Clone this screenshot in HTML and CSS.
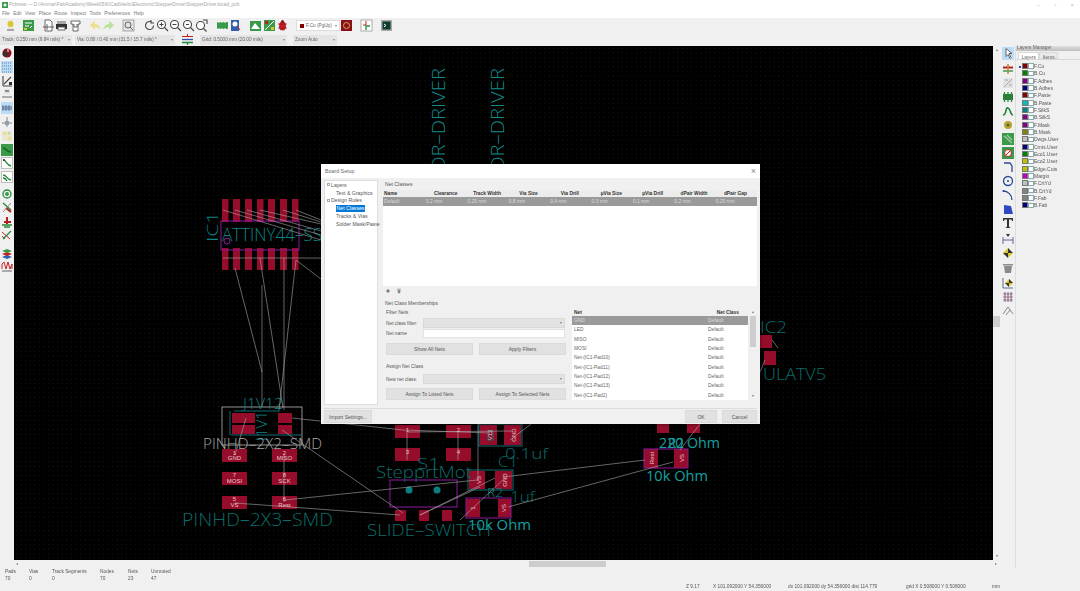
FILE: index.html
```html
<!DOCTYPE html>
<html lang="en">
<head>
<meta charset="utf-8">
<title>Pcbnew</title>
<link rel="stylesheet" href="styles.css">
</head>
<body>
<div class="app">
  <header class="titlebar">
    <svg class="appicon" viewBox="0 0 7 7"><rect width="7" height="7" class="f-green"/><rect x="2" y="2" width="3" height="3" class="f-white"/></svg>
    <span class="titletext">Pcbnew — D:\Ammar\FabAcademy\Week05\KiCad\Hello\Electronic\StepperDriver\StepperDriver.kicad_pcb</span>
    <div class="winctl"><span>–</span><span>▫</span><span>×</span></div>
  </header>
  <nav class="menubar">
    <span>File</span><span>Edit</span><span>View</span><span>Place</span><span>Route</span><span>Inspect</span><span>Tools</span><span>Preferences</span><span>Help</span>
  </nav>
  <div class="toolbar tb1">
    <svg class="tool" viewBox="0 0 13 13"><path class="f-pale" d="M4 1h5v9H4z"/><circle class="f-yellow" cx="6.5" cy="5" r="3"/><rect class="f-grey" x="3" y="10" width="7" height="2"/></svg>
    <i class="sp5"></i>
    <svg class="tool" viewBox="0 0 13 13"><rect class="f-green" x="1" y="1" width="11" height="11"/><path class="s-white" d="M3 4h7M3 7h4M8 9l2-2"/><rect class="f-yellow" x="2" y="9" width="3" height="2"/></svg>
    <i class="sp7"></i>
    <svg class="tool" viewBox="0 0 13 13"><path class="f-white s-dark" d="M3 1h5l2 2v9H3z"/><path class="s-dark" d="M1 8h11M5 5v6"/></svg>
    <svg class="tool" viewBox="0 0 13 13"><rect class="f-grey" x="2" y="2" width="9" height="3"/><rect class="f-dark" x="1" y="5" width="11" height="5"/><rect class="f-white s-dark" x="3" y="8" width="7" height="3"/></svg>
    <i class="sp1"></i>
    <svg class="tool" viewBox="0 0 13 13"><path class="f-white s-dark" d="M2 2h9v3H9v7H4V5H2z"/><path class="s-dark" d="M5 5v3h3V5"/></svg>
    <i class="sp7"></i>
    <svg class="tool" viewBox="0 0 13 13"><path class="f-pale-y" d="M1 6l5-4v3c3 0 5 2 6 6-2-2-3-3-6-3v3z"/></svg>
    <svg class="tool" viewBox="0 0 13 13"><path class="f-pale-g" d="M12 6L7 2v3C4 5 2 7 1 11c2-2 3-3 6-3v3z"/></svg>
    <i class="sp7"></i>
    <svg class="tool" viewBox="0 0 13 13"><rect class="f-light s-mid" x="1" y="1" width="11" height="11"/><circle class="s-dark" cx="6" cy="6" r="3"/><path class="s-dark" d="M8 8l3 3"/></svg>
    <i class="sp8"></i>
    <svg class="tool" viewBox="0 0 13 13"><path class="s-dark2" d="M10.5 6.5a4 4 0 1 1-2-3.4M8 1v3h3"/></svg>
    <svg class="tool" viewBox="0 0 13 13"><circle class="f-white s-dark2" cx="5.5" cy="5.5" r="4"/><path class="s-dark2" d="M8.5 8.5l3.5 3.5M3.5 5.5h4M5.5 3.5v4"/></svg>
    <svg class="tool" viewBox="0 0 13 13"><circle class="f-white s-dark2" cx="5.5" cy="5.5" r="4"/><path class="s-dark2" d="M8.5 8.5l3.5 3.5M3.5 5.5h4"/></svg>
    <svg class="tool" viewBox="0 0 13 13"><circle class="f-white s-dark2" cx="5.5" cy="5.5" r="4"/><path class="s-dark2" d="M8.5 8.5l3.5 3.5M4 5.5h3"/></svg>
    <svg class="tool" viewBox="0 0 13 13"><circle class="f-white s-dark2" cx="5.5" cy="6.5" r="4"/><path class="s-dark2" d="M8.5 9.5l3 3M8 1h4v4"/></svg>
    <i class="sp8"></i>
    <svg class="tool" viewBox="0 0 13 13"><rect class="f-green" x="1" y="3" width="11" height="7" rx="1"/><path class="s-white" d="M3 2v2M6 2v2M9 2v2M3 9v2M6 9v2M9 9v2"/></svg>
    <svg class="tool" viewBox="0 0 13 13"><rect class="f-blue" x="2" y="1" width="8" height="11"/><circle class="f-white" cx="6" cy="5" r="2.5"/><path class="s-red" d="M8 7l3 4"/></svg>
    <i class="sp7"></i>
    <svg class="tool" viewBox="0 0 13 13"><rect class="f-green" x="1" y="2" width="11" height="10"/><path class="f-white" d="M2 10l4-6 5 6z"/></svg>
    <i class="sp1"></i>
    <svg class="tool" viewBox="0 0 13 13"><rect class="f-green" x="1" y="1" width="11" height="11"/><path class="s-white" d="M2 11l9-9"/><rect class="f-red" x="2" y="2" width="3" height="3"/><rect class="f-yellow" x="8" y="8" width="3" height="3"/></svg>
    <svg class="tool" viewBox="0 0 13 13"><ellipse class="f-red" cx="6.5" cy="7" rx="3.5" ry="4.5"/><circle class="f-darkred" cx="6.5" cy="2.5" r="1.5"/><path class="s-darkred" d="M2 5l9 0M2 9l9 0"/></svg>
    <i class="sp7"></i>
    <div class="select sel-layer"><i class="swatch-red"></i>F.Cu (PgUp)<b class="caret"></b></div>
    <svg class="tool" viewBox="0 0 13 13"><rect class="f-darkred" x="1" y="1" width="11" height="11"/><circle class="s-gold" cx="6.5" cy="6.5" r="3"/></svg>
    <i class="sp7"></i>
    <svg class="tool" viewBox="0 0 13 13"><rect class="f-white s-mid" x="1" y="1" width="11" height="11"/><path class="s-red" d="M6 2v4H3"/><path class="s-greenline" d="M6 11V7h4"/></svg>
    <i class="sp7"></i>
    <svg class="tool" viewBox="0 0 13 13"><rect class="f-grey" x="1" y="1" width="11" height="11"/><rect class="f-term" x="2.5" y="2.5" width="8" height="8"/><path class="s-white" d="M4 5l2 1.5L4 8"/></svg>
  </div>
  <div class="toolbar tb2">
    <div class="select sel-track">Track: 0.250 mm (9.84 mils) *<b class="caret"></b></div>
    <div class="select sel-via">Via: 0.80 / 0.40 mm (31.5 / 15.7 mils) *<b class="caret"></b></div>
    <svg class="tool auto" viewBox="0 0 13 13"><path class="s-red" d="M1 3.5h11M6.5 1v3"/><path class="s-blueline" d="M1 6.5h11"/><path class="s-greenline" d="M1 9.5h11M6.5 9v3"/></svg>
    <div class="select sel-grid">Grid: 0.5000 mm (20.00 mils)<b class="caret"></b></div>
    <div class="select sel-zoom">Zoom Auto<b class="caret"></b></div>
  </div>
  <main class="main">
    <aside class="lefttools">
      <svg class="ltool t53" viewBox="0 0 12 12"><circle class="f-darkred" cx="6" cy="6" r="4.5"/><circle class="f-dark" cx="4" cy="7" r="2.5"/><path class="s-white" d="M7 2v3"/></svg>
      <svg class="ltool on" viewBox="0 0 12 12"><path class="s-dots" d="M1 2h10M1 5h10M1 8h10M1 11h10"/></svg>
      <svg class="ltool" viewBox="0 0 12 12"><path class="s-dark2" d="M2 11V1M2 11h9M3 9l7-7"/><rect class="f-dark" x="8" y="7" width="3" height="3"/></svg>
      <svg class="ltool" viewBox="0 0 12 12"><rect class="f-light" x="3" y="1" width="6" height="5"/><path class="s-dark" d="M1 9h10"/><path class="s-dark2" d="M4 3h4"/></svg>
      <svg class="ltool on" viewBox="0 0 12 12"><rect class="f-mid" x="1" y="4" width="10" height="4"/><path class="s-blue2" d="M2 3v6M5 3v6M8 3v6"/></svg>
      <svg class="ltool" viewBox="0 0 12 12"><path class="s-mid2" d="M6 1v10M1 7h10"/><rect class="f-mid" x="4" y="5" width="4" height="4"/></svg>
      <svg class="ltool" viewBox="0 0 12 12"><rect class="f-pale" x="1" y="1" width="10" height="10"/><circle class="f-pale-y" cx="3.5" cy="3.5" r="2"/><circle class="f-pale-y" cx="8.5" cy="8.5" r="2"/><circle class="f-pale-g" cx="8" cy="3" r="1.5"/></svg>
      <svg class="ltool" viewBox="0 0 12 12"><rect class="f-green" width="12" height="12"/><path class="s-dgreen" d="M2 4c3 0 3 4 8 4"/></svg>
      <svg class="ltool" viewBox="0 0 12 12"><rect class="f-white s-pale" x=".5" y=".5" width="11" height="11"/><path class="s-dgreen2" d="M2 3c4 0 3 5 8 6"/><circle class="f-dark" cx="3" cy="3" r="1"/></svg>
      <svg class="ltool" viewBox="0 0 12 12"><rect class="f-white s-pale" x=".5" y=".5" width="11" height="11"/><path class="s-dgreen2" d="M2 4c4 0 3 4 8 5M2 7c2 0 3 1 4 3"/></svg>
      <svg class="ltool t194" viewBox="0 0 12 12"><circle class="s-dgreen2" cx="6" cy="6" r="4"/><circle class="f-green" cx="6" cy="6" r="2"/></svg>
      <svg class="ltool" viewBox="0 0 12 12"><path class="s-dgreen2" d="M2 1l8 7"/><path class="s-redthick" d="M5 6l5 4"/><path class="s-mid2" d="M10 1L2 10"/></svg>
      <svg class="ltool" viewBox="0 0 12 12"><path class="s-redthick" d="M6 1v7M3 6h7"/><path class="s-dgreen2" d="M1 9h10M3 11h6"/></svg>
      <svg class="ltool" viewBox="0 0 12 12"><path class="s-red" d="M1 3l8 7M1 7l3 3"/><path class="s-dgreen2" d="M2 10l8-8"/></svg>
      <svg class="ltool t252" viewBox="0 0 12 12"><path class="f-blue" d="M1 9l5-2 5 2-5 2z"/><path class="f-red" d="M1 6l5-2 5 2-5 2z"/><path class="f-green" d="M1 3l5-2 5 2-5 2z"/></svg>
      <svg class="ltool" viewBox="0 0 12 12"><path class="s-red" d="M1 9V4l2-2 2 7 2-7 2 7 2-5v5"/><path class="s-dark" d="M1 11h10"/></svg>
    </aside>
    <section class="workspace">
      <div class="canvasrow">
        <div class="canvas">
          <svg class="pcb" viewBox="14 46 979 514" xmlns="http://www.w3.org/2000/svg">
            <g class="silk-v">
              <text transform="translate(445 172) rotate(-90)" textLength="104" lengthAdjust="spacingAndGlyphs">OR–DRIVER</text>
              <text transform="translate(504 172) rotate(-90)" textLength="104" lengthAdjust="spacingAndGlyphs">OR–DRIVER</text>
            </g>
            <g class="pads">
              <rect x="222" y="199" width="6.5" height="23"/><rect x="233" y="199" width="7" height="23"/><rect x="245" y="199" width="7" height="23"/><rect x="257" y="199" width="6.5" height="23"/><rect x="268" y="199" width="7" height="23"/><rect x="280" y="199" width="7" height="23"/><rect x="292" y="199" width="6.5" height="23"/>
              <rect x="222" y="248" width="6.5" height="22"/><rect x="233" y="248" width="7" height="22"/><rect x="245" y="248" width="7" height="22"/><rect x="257" y="248" width="6.5" height="22"/><rect x="268" y="248" width="7" height="22"/><rect x="280" y="248" width="7" height="22"/><rect x="292" y="248" width="6.5" height="22"/>
              <rect x="232" y="413" width="23" height="10"/><rect x="232" y="425" width="23" height="9"/><rect x="278" y="413" width="14" height="10"/><rect x="278" y="425" width="14" height="9"/>
              <rect x="222" y="449" width="25" height="13"/><rect x="272" y="449" width="25" height="13"/><rect x="222" y="472" width="25" height="13"/><rect x="272" y="472" width="25" height="13"/><rect x="222" y="496" width="25" height="13"/><rect x="272" y="496" width="25" height="13"/>
              <rect x="395" y="425" width="25" height="13"/><rect x="446" y="425" width="25" height="13"/><rect x="395" y="448" width="25" height="13"/><rect x="446" y="448" width="25" height="13"/>
              <rect x="395" y="510" width="11" height="11"/><rect x="419" y="510" width="10" height="11"/><rect x="442" y="510" width="10" height="11"/>
              <rect x="480" y="425" width="17" height="20"/><rect x="504" y="425" width="17" height="20"/>
              <rect x="469" y="471" width="16" height="18"/><rect x="495" y="471" width="17" height="18"/>
              <rect x="466" y="499" width="14" height="18"/><rect x="498" y="499" width="13" height="18"/>
              <rect x="657" y="421" width="12" height="12"/><rect x="687" y="421" width="13" height="12"/>
              <rect x="644" y="449" width="14" height="19"/><rect x="674" y="449" width="14" height="19"/>
              <rect x="760" y="335" width="12" height="13"/><rect x="764" y="351" width="12" height="14"/>
            </g>
            <g class="outline">
              <rect x="221" y="221" width="78" height="29"/>
              <circle cx="227" cy="241" r="3"/>
              <rect x="390" y="480" width="67" height="27"/>
              <rect x="466" y="498" width="45" height="20"/>
              <rect x="644" y="449" width="44" height="19"/>
            </g>
            <g class="teal-line">
              <path d="M234 411h46M231 435h70M230 411v24"/>
              <rect x="479" y="424" width="43" height="22"/>
              <rect x="468" y="470" width="45" height="20"/>
              <rect x="488" y="431" width="5" height="9"/>
            </g>
            <rect class="white-box" x="222" y="407" width="80" height="38"/>
            <g class="silk">
              <text class="s14" transform="translate(218 242) rotate(-90)" textLength="30" lengthAdjust="spacingAndGlyphs">IC1</text>
              <text x="222" y="241" textLength="100" lengthAdjust="spacingAndGlyphs">ATTINY44–SS</text>
              <text class="s14" x="243" y="409" textLength="40" lengthAdjust="spacingAndGlyphs">J1V12</text>
              <text class="s14" transform="translate(267 441) rotate(-90)" textLength="30" lengthAdjust="spacingAndGlyphs">J1V1</text>
              <text class="s17 dim" x="182" y="526" textLength="151" lengthAdjust="spacingAndGlyphs">PINHD–2X3–SMD</text>
              <text class="s14 dim" x="417" y="469" textLength="23" lengthAdjust="spacingAndGlyphs">S1</text>
              <text class="s16 dim" x="376" y="478" textLength="96" lengthAdjust="spacingAndGlyphs">StepprtMot</text>
              <text class="s16 dim" x="367" y="536" textLength="124" lengthAdjust="spacingAndGlyphs">SLIDE–SWITCH</text>
              <text class="s14 dim" x="505" y="459" textLength="43" lengthAdjust="spacingAndGlyphs">0.1uf</text>
              <text class="s14 dim" x="498" y="467" textLength="20" lengthAdjust="spacingAndGlyphs">C1</text>
              <text class="s12" x="487" y="497" textLength="16" lengthAdjust="spacingAndGlyphs">R2</text>
              <text class="s14 dim" x="510" y="502" textLength="25" lengthAdjust="spacingAndGlyphs">1uf</text>
              <text class="s13" x="468" y="530" textLength="63" lengthAdjust="spacingAndGlyphs">10k Ohm</text>
              <text class="s13" x="659" y="448" textLength="61" lengthAdjust="spacingAndGlyphs">220 Ohm</text>
              <text class="s13" x="668" y="448" textLength="16" lengthAdjust="spacingAndGlyphs">R2</text>
              <text class="s13" x="646" y="481" textLength="62" lengthAdjust="spacingAndGlyphs">10k Ohm</text>
              <text class="s16 dim" x="760" y="333" textLength="27" lengthAdjust="spacingAndGlyphs">IC2</text>
              <text class="s16 dim" x="763" y="380" textLength="63" lengthAdjust="spacingAndGlyphs">ULATV5</text>
            </g>
            <text class="silk-grey" x="203" y="449" textLength="119" lengthAdjust="spacingAndGlyphs">PINHD–2X2–SMD</text>
            <circle class="teal-dot" cx="409" cy="490" r="3.5"/>
            <circle class="teal-dot" cx="437" cy="490" r="3.5"/>
            <g class="ratsnest">
              <path d="M223 210L321 240M235 210L321 235M247 210L321 231M260 210L321 224M283 210L321 222M296 210L321 220"/>
              <path d="M223 258H321M296 260L321 279"/>
              <path d="M260 258L283 408M284 258V410M296 260L279 410M235 268L262 372M262 285V407"/>
              <path d="M292 418L403 430L490 433M282 430L403 513M235 503L400 515M285 500L477 480"/>
              <path d="M407 432V460M458 432V460M478 424V480M246 418L235 455M284 455V502M510 440L531 424"/>
              <path d="M503 477L645 460M508 507L673 462M460 520L505 478M420 515L495 478M680 450L700 424M420 515L480 487"/>
              <path d="M772 340L778 348M765 360L760 372M408 432L512 431"/>
            </g>
            <g class="padtext">
              <text x="234.500" y="455">1</text><text x="234.500" y="460">GND</text>
              <text x="284.500" y="455">2</text><text x="284.500" y="460">MISO</text>
              <text x="234.500" y="477">7</text><text x="234.500" y="483">MOSI</text>
              <text x="284.500" y="477">8</text><text x="284.500" y="483">SCK</text>
              <text x="234.500" y="501">5</text><text x="234.500" y="507">VS</text>
              <text x="284.500" y="501">6</text><text x="284.500" y="507">Rest</text>
              <text x="407.500" y="432">1</text><text x="458.500" y="432">2</text>
              <text x="407.500" y="454">3</text><text x="458.500" y="454">4</text>
              <text transform="translate(492 435) rotate(-90)">V12</text>
              <text transform="translate(516 435) rotate(-90)">GND</text>
              <text transform="translate(481 480) rotate(-90)">VS</text>
              <text transform="translate(507 480) rotate(-90)">GND</text>
              <text transform="translate(475 508) rotate(-90)">1</text>
              <text transform="translate(506 508) rotate(-90)">VS</text>
              <text transform="translate(654 458) rotate(-90)">Rest</text>
              <text transform="translate(684 458) rotate(-90)">VS</text>
            </g>
          </svg>
        </div>
        <div class="vscroll"><i class="arrow-u"></i><i class="vthumb"></i><i class="arrow-d"></i></div>
      </div>
      <div class="hscroll"><i class="arrow-l"></i><i class="hthumb"></i><i class="arrow-r"></i></div>
    </section>
    <aside class="righttools">
      <svg class="rtool on" viewBox="0 0 12 12"><path class="f-white s-dark" d="M4 1v8l2-2 2 4 1-1-2-4h3z"/></svg>
      <svg class="rtool" viewBox="0 0 12 12"><path class="s-redthick" d="M1 4.500h10"/><path class="s-greenline" d="M1 8h10"/><path class="s-orange" d="M6 1v10"/></svg>
      <svg class="rtool r83" viewBox="0 0 12 12"><rect class="f-light" x="1" y="1" width="10" height="10"/><path class="s-mid" d="M2 10L10 2M3 3h3M7 8h3"/></svg>
      <svg class="rtool" viewBox="0 0 12 12"><rect class="f-dgreen" x="1" y="3" width="10" height="6"/><path class="s-dgreen2" d="M2.500 1v10M6 1v10M9.500 1v10"/></svg>
      <svg class="rtool" viewBox="0 0 12 12"><path class="s-dgreen3" d="M1 10c4 0 2-8 5-7s2 7 5 7"/></svg>
      <svg class="rtool" viewBox="0 0 12 12"><circle class="f-gold" cx="6" cy="6" r="4"/><circle class="f-dgreen" cx="6" cy="6" r="1.500"/></svg>
      <svg class="rtool" viewBox="0 0 12 12"><rect class="f-green" width="12" height="12"/><path class="s-pale2" d="M2 3l8 7M5 2l5 5"/></svg>
      <svg class="rtool" viewBox="0 0 12 12"><rect class="f-green" width="12" height="12"/><circle class="f-white s-red" cx="6" cy="6" r="3.500"/><path class="s-red" d="M4 8l4-4"/></svg>
      <svg class="rtool" viewBox="0 0 12 12"><path class="s-navy" d="M2 2h6l2 3v6"/></svg>
      <svg class="rtool" viewBox="0 0 12 12"><circle class="s-navy" cx="6" cy="6" r="4.500"/><circle class="f-navy" cx="6" cy="6" r="1"/></svg>
      <svg class="rtool" viewBox="0 0 12 12"><path class="s-navy" d="M1 2c5 0 9 4 9 9"/><circle class="f-navy" cx="1.500" cy="2" r="1"/></svg>
      <svg class="rtool" viewBox="0 0 12 12"><path class="f-navy2" d="M2 2l7 1 2 8H2z"/></svg>
      <svg class="rtool" viewBox="0 0 12 12"><path class="f-dark3" d="M1 1h10v3H10L9.500 2.500H7v7.500l1.500.5V11h-5v-.5L5 10V2.500H2.500L2 4H1z"/></svg>
      <svg class="rtool r238" viewBox="0 0 12 12"><path class="s-navy1" d="M1 4v7M11 4v7M1 7h10"/><path class="f-dark3" d="M4 1v3M8 1v3M4 1l2 3 2-3"/></svg>
      <svg class="rtool" viewBox="0 0 12 12"><path class="f-yellow" d="M6 1l5 5-5 5-5-5z"/><path class="f-dark" d="M6 1l5 5H6zM6 6v5L1 6z"/></svg>
      <svg class="rtool r267" viewBox="0 0 12 12"><path class="f-mid3" d="M1 2h10v1.500H1zM2 4h8l-1 7H3z"/></svg>
      <svg class="rtool r283" viewBox="0 0 12 12"><path class="s-navy1" d="M1 1v10h10"/><path class="f-yellow" d="M7 2l4 4-4 4-4-4z"/><path class="f-dark" d="M7 2l4 4H7zM7 6v4L3 6z"/></svg>
      <svg class="rtool" viewBox="0 0 12 12"><path class="s-red1" d="M1 3h10M1 6h10M1 9h10"/><path class="s-navy1" d="M3 1v10M6 1v10M9 1v10"/></svg>
      <svg class="rtool" viewBox="0 0 12 12"><path class="s-mid2" d="M1 9l5-7 5 7M4 10l4-5"/></svg>
    </aside>
    <aside class="layers">
      <div class="layers-head">Layers Manager</div>
      <div class="layer-tabs"><span class="tab active">Layers</span><span class="tab">Items</span></div>
      <ul class="layer-list">
        <li class="cur"><i class="c1"></i><b></b>F.Cu</li>
        <li><i class="c2"></i><b></b>B.Cu</li>
        <li><i class="c3"></i><b></b>F.Adhes</li>
        <li><i class="c4"></i><b></b>B.Adhes</li>
        <li><i class="c1"></i><b></b>F.Paste</li>
        <li><i class="c5"></i><b></b>B.Paste</li>
        <li><i class="c6"></i><b></b>F.SilkS</li>
        <li><i class="c3"></i><b></b>B.SilkS</li>
        <li><i class="c3"></i><b></b>F.Mask</li>
        <li><i class="c7"></i><b></b>B.Mask</li>
        <li><i class="c8"></i><b></b>Dwgs.User</li>
        <li><i class="c4"></i><b></b>Cmts.User</li>
        <li><i class="c2"></i><b></b>Eco1.User</li>
        <li><i class="c9"></i><b></b>Eco2.User</li>
        <li><i class="c9"></i><b></b>Edge.Cuts</li>
        <li><i class="c10"></i><b></b>Margin</li>
        <li><i class="c8"></i><b></b>F.CrtYd</li>
        <li><i class="c11"></i><b></b>B.CrtYd</li>
        <li><i class="c11"></i><b></b>F.Fab</li>
        <li><i class="c4"></i><b></b>B.Fab</li>
      </ul>
    </aside>
  </main>
  <footer class="statusbar">
    <div class="stats">
      <div class="stat s-a"><span>Pads</span><span>70</span></div>
      <div class="stat s-b"><span>Vias</span><span>0</span></div>
      <div class="stat s-c"><span>Track Segments</span><span>0</span></div>
      <div class="stat s-d"><span>Nodes</span><span>70</span></div>
      <div class="stat s-e"><span>Nets</span><span>23</span></div>
      <div class="stat s-f"><span>Unrouted</span><span>47</span></div>
    </div>
    <div class="coords">
      <span class="co-z">Z 9.17</span>
      <span class="co-xy">X 101.092000 Y 54.356000</span>
      <span class="co-d">dx 101.092000 dy 54.356000 dist 114.779</span>
      <span class="co-g">grid X 0.508000 Y 0.508000</span>
      <span class="co-u">mm</span>
    </div>
  </footer>

  <div class="dialog">
    <div class="dlg-title"><span>Board Setup</span><span class="dlg-close">×</span></div>
    <div class="dlg-body">
      <div class="tree">
        <div class="node top"><i class="exp"></i>Layers</div>
        <div class="node sub">Text &amp; Graphics</div>
        <div class="node top"><i class="exp"></i>Design Rules</div>
        <div class="node sub"><span class="picked">Net Classes</span></div>
        <div class="node sub">Tracks &amp; Vias</div>
        <div class="node sub">Solder Mask/Paste</div>
      </div>
      <div class="page">
        <div class="page-title">Net Classes</div>
        <div class="nc-table">
          <div class="nc-row nc-head"><span class="first">Name</span><span>Clearance</span><span>Track Width</span><span>Via Size</span><span>Via Drill</span><span>µVia Size</span><span>µVia Drill</span><span>dPair Width</span><span>dPair Gap</span></div>
          <div class="nc-row nc-sel"><span>Default</span><span>0.2 mm</span><span>0.25 mm</span><span>0.8 mm</span><span>0.4 mm</span><span>0.3 mm</span><span>0.1 mm</span><span>0.2 mm</span><span>0.25 mm</span></div>
        </div>
        <div class="nc-tools">
          <svg class="mini" viewBox="0 0 8 8"><path class="s-dark2" d="M4 1.500v5M1.500 4h5"/></svg>
          <svg class="mini" viewBox="0 0 8 8"><path class="f-mid3" d="M1.500 1h5v1h-5zM2 2.500h4L5.500 7h-3z"/></svg>
        </div>
        <div class="group-title">Net Class Memberships</div>
        <div class="members">
          <div class="m-left">
            <div class="m-label">Filter Nets</div>
            <div class="field first-field"><label>Net class filter:</label><div class="combo"><b class="caret"></b></div></div>
            <div class="field"><label>Net name</label><div class="textbox"></div></div>
            <div class="btns"><button>Show All Nets</button><button>Apply Filters</button></div>
            <div class="m-label assign">Assign Net Class</div>
            <div class="field assign-field"><label>New net class:</label><div class="combo"><b class="caret"></b></div></div>
            <div class="btns last"><button>Assign To Listed Nets</button><button>Assign To Selected Nets</button></div>
          </div>
          <div class="m-right">
            <div class="nets">
              <div class="net net-head"><span>Net</span><span class="cls">Net Class</span></div>
              <div class="net net-sel"><span>GND</span><span>Default</span></div>
              <div class="net"><span>LED</span><span>Default</span></div>
              <div class="net"><span>MISO</span><span>Default</span></div>
              <div class="net"><span>MOSI</span><span>Default</span></div>
              <div class="net"><span>Net-(IC1-Pad10)</span><span>Default</span></div>
              <div class="net"><span>Net-(IC1-Pad11)</span><span>Default</span></div>
              <div class="net"><span>Net-(IC1-Pad12)</span><span>Default</span></div>
              <div class="net"><span>Net-(IC1-Pad13)</span><span>Default</span></div>
              <div class="net"><span>Net-(IC1-Pad2)</span><span>Default</span></div>
            </div>
            <div class="net-scroll"><i class="arrow-u"></i><i class="nthumb"></i><i class="arrow-d"></i></div>
          </div>
        </div>
      </div>
    </div>
    <div class="dlg-foot">
      <button class="import">Import Settings...</button>
      <div class="foot-right"><button class="ok">OK</button><button class="cancel">Cancel</button></div>
    </div>
  </div>
</div>
</body>
</html>
```
FILE: styles.css
```css
* { box-sizing: border-box; }
html, body { margin: 0; padding: 0; }
body { width: 1080px; height: 591px; overflow: hidden; font-family: "Liberation Sans", Arial, sans-serif; font-size: 5px; color: #555; background: #f0f0f0; }
.app { position: relative; width: 1080px; height: 591px; display: flex; flex-direction: column; filter: blur(.3px); }

.titlebar { height: 9px; background: #fff; display: flex; align-items: center; padding-left: 2px; color: #a5a5a5; font-size: 4.850px; }
.appicon { width: 6px; height: 6px; margin-right: 1px; }
.winctl { margin-left: auto; display: flex; gap: 14px; padding-right: 6px; color: #bbb; font-size: 6px; }
.menubar { height: 9px; background: #fff; display: flex; align-items: center; gap: 3.500px; padding-left: 2px; font-size: 4.800px; color: #777; }

.toolbar { display: flex; align-items: center; background: #f0f0f0; }
.tb1 { height: 15px; padding-left: 4px; }
.tb2 { height: 13px; padding-left: 0; }
.tool { width: 13px; height: 13px; flex: none; }
.tool.auto { margin: 0 6.500px 0 5.500px; }
.sp1 { width: 1px; } .sp5 { width: 5px; } .sp7 { width: 7px; } .sp8 { width: 8px; }
.select { height: 10px; display: flex; align-items: center; position: relative; background: #e4e4e4; color: #666; font-size: 4.700px; padding-left: 2px; flex: none; white-space: nowrap; }
.sel-layer { width: 44px; height: 11px; background: #fff; border: 1px solid #ddd; }
.sel-track { width: 72px; margin-right: 3px; }
.sel-via { width: 100px; }
.sel-grid { width: 87px; }
.sel-zoom { width: 44px; margin-left: 6px; }
.swatch-red { width: 4px; height: 4px; background: #840000; margin: 0 2px 0 1px; }
.caret { position: absolute; right: 2px; top: 50%; margin-top: -1px; border: 1.500px solid transparent; border-top: 2px solid #888; border-bottom: 0; }

.main { display: flex; height: 522px; }
.lefttools { width: 14px; flex: none; display: flex; flex-direction: column; padding-top: 1px; }
.ltool { width: 12px; height: 12px; margin: 0 0 1.800px 1px; flex: none; }
.ltool.t194 { margin-top: 3px; }
.ltool.t252 { margin-top: 5px; margin-bottom: 0; }
.ltool.on, .rtool.on { background: #bcdcf5; }

.workspace { width: 986px; flex: none; display: flex; flex-direction: column; }
.canvasrow { height: 514px; display: flex; }
.canvas { width: 979px; background-color: #000; background-image: radial-gradient(circle, #1a1a1a .5px, transparent .7px); background-size: 4.600px 4.600px; }
.pcb { display: block; width: 979px; height: 514px; }
.vscroll { width: 7px; background: #f0f0f0; display: flex; flex-direction: column; align-items: center; padding: 3px 0; }
.vthumb { display: block; width: 7px; height: 11px; background: #cdcdcd; margin-top: 265px; }
.vscroll .arrow-d { margin-top: auto; }
.hscroll { height: 8px; display: flex; align-items: center; padding: 0 2px; position: relative; }
.hthumb { display: block; width: 77px; height: 6px; background: #cdcdcd; margin-left: 511px; }
.hscroll .arrow-r { margin-left: auto; margin-right: 1px; }
.arrow-u, .arrow-d, .arrow-l, .arrow-r { display: block; width: 0; height: 0; border: 1.500px solid transparent; }
.arrow-u { border-top: 0; border-bottom: 2px solid #777; }
.arrow-d { border-bottom: 0; border-top: 2px solid #777; }
.arrow-l { border-left: 0; border-right: 2px solid #777; }
.arrow-r { border-right: 0; border-left: 2px solid #777; }

.righttools { width: 16px; flex: none; display: flex; flex-direction: column; align-items: center; padding-top: 1px; border-right: 1px solid #ddd; }
.rtool { width: 12px; height: 12px; margin-bottom: 2px; flex: none; }
.rtool.on { height: 13px; margin-bottom: 3px; }
.rtool.r238 { margin-top: 2px; }
.rtool.r267 { margin-top: 1px; }
.rtool.r283 { margin-top: 1px; }

.layers { width: 64px; flex: none; background: #f0f0f0; }
.layers-head { height: 5px; line-height: 4px; padding-left: 1px; font-size: 4.800px; color: #666; background: linear-gradient(#e0e0e0, #bdbdbd); }
.layer-tabs { display: flex; padding: 1px 0 0 2px; height: 9px; border-bottom: 1px solid #d9d9d9; }
.tab { padding: 1.500px 2.500px 0; font-size: 4.800px; color: #666; background: #e9e9e9; border: 1px solid #d9d9d9; }
.tab.active { background: #fff; border-bottom: 0; }
.layer-list { list-style: none; margin: 0; padding: 2.500px 0 0 6px; }
.layer-list li { height: 7.330px; display: flex; align-items: center; font-size: 5px; color: #555; position: relative; white-space: nowrap; }
.layer-list i { width: 5.500px; height: 6px; border: .5px solid #777; }
.layer-list b { width: 5.500px; height: 5.500px; margin: 0 .500px 0 .500px; background: #fff; border: .5px solid #8aa; }
.layer-list .cur::before { content: ""; position: absolute; left: -3px; top: 3px; width: 2px; height: 2px; background: #2050c0; }
.c1 { background: #840000; } .c2 { background: #008400; } .c3 { background: #840084; }
.c4 { background: #000084; } .c5 { background: #00c2c2; } .c6 { background: #008484; }
.c7 { background: #848400; } .c8 { background: #c2c2c2; } .c9 { background: #c2c200; }
.c10 { background: #c200c2; } .c11 { background: #848484; }

.statusbar { height: 23px; position: relative; display: flex; flex-direction: column; font-size: 4.800px; color: #555; }
.stats { display: flex; padding: 1px 0 0 5px; height: 14px; }
.stat { display: flex; flex-direction: column; gap: 1.500px; }
.s-a { width: 24px; } .s-b { width: 23px; } .s-c { width: 48px; } .s-d { width: 28px; } .s-e { width: 23px; }
.coords { display: flex; padding-left: 686px; height: 9px; align-items: center; white-space: nowrap; }
.co-z { width: 27px; } .co-xy { width: 75px; } .co-d { width: 118px; } .co-g { width: 86px; }

button { font: inherit; font-size: 5px; color: #555; background: #e1e1e1; border: 1px solid #dadada; padding: 0; }

.dialog { position: absolute; left: 321px; top: 164px; width: 439px; height: 260px; background: #f0f0f0; box-shadow: 0 0 3px rgba(0,0,0,.6); display: flex; flex-direction: column; }
.dlg-title { height: 14px; background: #fff; display: flex; align-items: center; justify-content: space-between; padding: 0 4px; font-size: 5.300px; color: #666; }
.dlg-close { font-size: 9px; color: #888; line-height: 9px; }
.dlg-body { display: flex; padding: 2px 3px 0; height: 228px; }
.tree { width: 54px; height: 225px; flex: none; background: #fff; border: 1px solid #dedede; }
.node { height: 7.800px; display: flex; align-items: center; font-size: 5.200px; color: #555; white-space: nowrap; }
.node.top { padding-left: 2px; }
.node.sub { padding-left: 11px; }
.exp { width: 3px; height: 3px; margin-right: 1px; border: .5px solid #aaa; }
.picked { background: #0078d7; color: #fff; padding: 0 .5px; line-height: 7px; }

.page { margin-left: 5px; width: 374px; display: flex; flex-direction: column; }
.page-title { height: 10px; padding-left: 2px; line-height: 9px; font-size: 5.100px; color: #555; }
.nc-table { height: 96px; background: #fff; }
.nc-row { display: grid; grid-template-columns: 42px repeat(8, 41.400px); }
.nc-head { height: 7px; background: #ececec; align-items: center; font-weight: bold; color: #333; text-align: center; font-size: 4.900px; }
.nc-head .first { text-align: left; padding-left: 1px; }
.nc-sel { height: 9px; background: #9a9a9a; color: #dcdcdc; align-items: center; font-size: 4.900px; }
.nc-sel span { padding-left: 1px; }
.nc-tools { height: 10px; display: flex; align-items: center; gap: 5px; padding-left: 2px; }
.mini { width: 6px; height: 6px; }
.group-title { margin-top: 4px; height: 6px; line-height: 6px; padding-left: 2px; font-size: 5px; }
.members { display: flex; margin-top: 3px; padding-left: 3px; }
.m-left { width: 180px; flex: none; }
.m-label { height: 8px; line-height: 8px; font-size: 4.900px; }
.m-label.assign { margin-top: 8px; }
.field { display: flex; align-items: center; height: 10px; }
.field label { width: 37px; flex: none; font-size: 4.800px; }
.first-field { margin-top: 1px; }
.assign-field { margin-top: 3px; }
.combo { position: relative; width: 142px; height: 10px; background: #e3e3e3; border: 1px solid #d9d9d9; }
.textbox { width: 142px; height: 9px; background: #fff; border: 1px solid #e2e2e2; }
.btns { display: flex; justify-content: space-between; margin-top: 5px; }
.btns button { width: 87px; height: 12px; }
.btns.last { margin-top: 4px; }
.m-right { margin-left: 6px; display: flex; }
.nets { width: 176px; background: #fff; }
.net { display: flex; height: 9.300px; align-items: center; padding-left: 2px; font-size: 4.900px; color: #666; }
.net span:first-child { width: 134px; }
.net-head { height: 7px; background: #f0f0f0; font-weight: bold; color: #333; }
.net-head .cls { width: 31px; text-align: right; }
.net-sel { background: #9a9a9a; color: #dcdcdc; }
.net-scroll { width: 7px; margin-left: 1px; display: flex; flex-direction: column; align-items: center; padding-top: 2px; }
.nthumb { display: block; width: 6px; height: 31px; background: #cdcdcd; margin-top: 3px; }
.net-scroll .arrow-d { margin-top: auto; margin-bottom: 3px; }

.dlg-foot { border-top: 1px solid #dcdcdc; margin: 2px 3px 0; display: flex; justify-content: space-between; padding-top: 1px; }
.dlg-foot button { height: 13px; }
.import { width: 48px; }
.foot-right { display: flex; gap: 5px; }
.ok { width: 32px; } .cancel { width: 35px; }

/* board artwork */
.pads rect { fill: #950d2b; }
.outline rect, .outline circle { fill: none; stroke: #8a1a9a; stroke-width: 1; }
.teal-line path, .teal-line rect { fill: none; stroke: #156a72; stroke-width: 1; }
.white-box { fill: none; stroke: #b5b5b5; stroke-width: .8; }
.silk text, .silk-v text { fill: #0f8484; font-family: "Open Sans", sans-serif; font-size: 19px; font-weight: 300; }
.silk-v text { font-size: 18px; fill: #128a88; }
.silk .s12 { font-size: 12px; }
.silk .s13 { font-size: 14px; fill: #16a0a0; font-weight: 400; }
.silk .s14 { font-size: 15px; }
.silk .s16 { font-size: 17px; }
.silk .s17 { font-size: 18px; }
.silk .dim { fill: #0b6d6b; }
.silk-grey { fill: #a6a6a6; font-family: "Open Sans", sans-serif; font-size: 15px; font-weight: 300; }
.teal-dot { fill: #0a7f7f; }
.ratsnest path { fill: none; stroke: #aaa; stroke-width: .6; }
.padtext text { fill: #e8c8c8; font-family: "Liberation Sans", sans-serif; font-size: 6px; text-anchor: middle; }

/* icon paint */
.f-white { fill: #fff; } .f-green { fill: #3a9a4a; } .f-dgreen { fill: #2a7a3a; } .f-grey { fill: #a8a8a8; } .f-dark { fill: #333; } .f-dark3 { fill: #333; }
.f-light { fill: #e2e2e2; } .f-mid { fill: #8f9fb0; } .f-mid3 { fill: #8a8a8a; } .f-pale { fill: #e8e8d8; } .f-yellow { fill: #d8c830; }
.f-pale-y { fill: #ecdf90; } .f-pale-g { fill: #b8e0a0; } .f-blue { fill: #3060b0; } .f-red { fill: #c02020; } .f-darkred { fill: #8a1020; }
.f-term { fill: #0c3c30; } .f-gold { fill: #c0a030; } .f-navy { fill: #2040a0; } .f-navy2 { fill: #3048c0; }
svg path[class^="s-"], svg circle[class^="s-"] { fill: none; }
.s-white { stroke: #fff; } .s-dark { stroke: #444; stroke-width: .8; } .s-dark2 { stroke: #444; stroke-width: 1.100; } .s-mid { stroke: #999; stroke-width: .8; }
.s-mid2 { stroke: #888; stroke-width: 1; } .s-red { stroke: #c02020; } .s-red1 { stroke: #c04040; stroke-width: .7; } .s-redthick { stroke: #b02020; stroke-width: 2; }
.s-greenline { stroke: #209040; stroke-width: 1.300; } .s-blueline { stroke: #3050b0; stroke-width: 1.300; } .s-darkred { stroke: #8a1020; stroke-width: .7; }
.s-gold { stroke: #d0b040; } .s-dots { stroke: #5080b0; stroke-width: 1; stroke-dasharray: 1 1; } .s-blue2 { stroke: #4070a8; stroke-width: .8; }
.s-pale { stroke: #c0c0c0; } .s-dgreen { stroke: #1a6a2a; stroke-width: 2; } .s-dgreen2 { stroke: #2a8a3a; stroke-width: 1.300; } .s-dgreen3 { stroke: #208040; stroke-width: 1.600; }
.s-orange { stroke: #c08030; stroke-width: 1.500; } .s-navy { stroke: #2a4a90; stroke-width: 1.300; } .s-navy1 { stroke: #3a4a80; stroke-width: .8; } .s-pale2 { stroke: #a0c8a0; stroke-width: 1.500; }
```
